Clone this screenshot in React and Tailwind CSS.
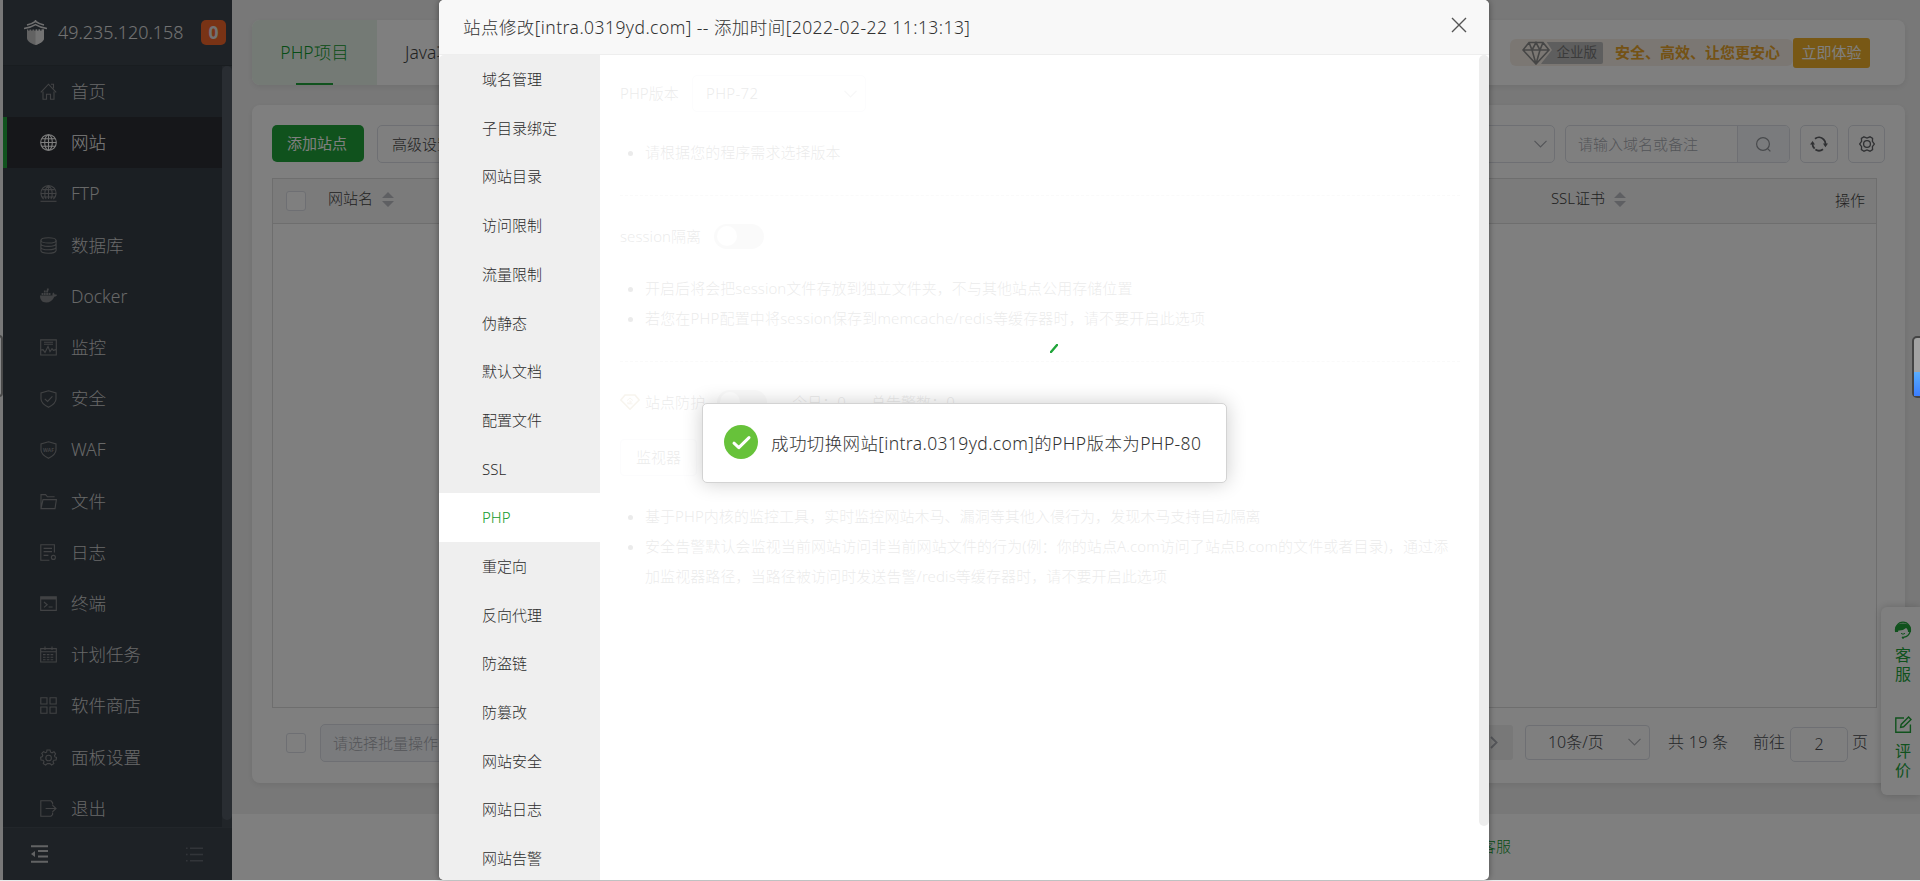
import React from 'react';
import clsx from 'clsx';

const FONT = "font-light font-['Noto_Sans','Noto_Sans_CJK_SC',sans-serif]";

const sideMenu = [
  { label: '首页', icon: 'home' },
  { label: '网站', icon: 'globe', active: true },
  { label: 'FTP', icon: 'ftp' },
  { label: '数据库', icon: 'database' },
  { label: 'Docker', icon: 'docker' },
  { label: '监控', icon: 'monitor' },
  { label: '安全', icon: 'shield' },
  { label: 'WAF', icon: 'waf' },
  { label: '文件', icon: 'folder' },
  { label: '日志', icon: 'logs' },
  { label: '终端', icon: 'terminal' },
  { label: '计划任务', icon: 'calendar' },
  { label: '软件商店', icon: 'store' },
  { label: '面板设置', icon: 'settings' },
  { label: '退出', icon: 'logout' },
];

const siteTabs = [
  '域名管理', '子目录绑定', '网站目录', '访问限制', '流量限制', '伪静态', '默认文档', '配置文件', 'SSL',
  'PHP', '重定向', '反向代理', '防盗链', '防篡改', '网站安全', '网站日志', '网站告警',
];

const SHIELD = 'M8.5 .8 L16 3 V9 C16 12.6 12.8 15 8.5 17.3 C4.2 15 1 12.6 1 9 V3 Z';
const GEAR = 'M7 1 H10 L10.6 3.2 L12 3.8 L14 2.7 L15.6 4.8 L14.5 6.6 L14.9 7.9 L16.6 8.5 L16 11 L14 11.2 L13 12.6 L13.8 14.6 L11.6 16 L10 14.6 H7.4 L5.6 16 L3.3 14.6 L4 12.5 L3 11.2 L1 11 L.6 8.4 L2.3 7.6 L2.8 6.2 L1.8 4.4 L3.6 2.6 L5.5 3.7 L6.6 3.2 Z';

const menuIcons = {
  home: (
    <>
      <path d="M.8 9.3 L8.5 1.2 L16.2 9.3" />
      <path d="M3 8.5 V16.3 H6.5 V11.3 H10.5 V16.3 H14 V8.5" />
      <path d="M11 1.3 H13.5 V5.5" />
    </>
  ),
  globe: (
    <>
      <circle cx="8.5" cy="8.5" r="7.8" />
      <ellipse cx="8.5" cy="8.5" rx="3.8" ry="7.8" />
      <path d="M8.5 .7 V16.3 M1 8.5 H16 M2 4.8 H15 M2 12.2 H15" />
    </>
  ),
  ftp: (
    <>
      <path d="M3.6 14 A7.6 7.6 0 1 1 13.4 14" />
      <path d="M6 14 C4 10 4.3 3.5 8.5 .8 C12.7 3.5 13 10 11 14 M8.5 .8 V14 M1 8.5 H16 M2.3 4.6 H14.7 M2.3 12 H14.7" />
      <path d="M.5 16.3 H16.5" />
    </>
  ),
  database: (
    <>
      <ellipse cx="8.5" cy="3.4" rx="7.6" ry="2.6" />
      <path d="M.9 3.4 V13.6 C.9 17.2 16.1 17.2 16.1 13.6 V3.4 M.9 6.8 C.9 10.2 16.1 10.2 16.1 6.8 M.9 10.2 C.9 13.6 16.1 13.6 16.1 10.2" />
    </>
  ),
  docker: (
    <>
      <path fill="currentColor" stroke="none" d="M0 7.6 H12.6 C12.2 6.4 12.6 5.2 13.4 4.6 C14.2 5.2 14.5 5.9 14.6 6.6 C15.4 6.4 16.4 6.5 17 7 C16.6 8.2 15.6 8.7 14.3 8.7 C12.8 12.6 9.8 14.5 6.2 14.5 C2 14.5 0 12 0 7.6 Z" />
      <path strokeWidth="2" strokeDasharray="1.8 .5" d="M1.6 6 H11 M3.9 3.6 H8.6 M6.9 1.4 H8.8" />
    </>
  ),
  monitor: (
    <>
      <path d="M.7 .9 H16.3 V16 H.7 Z M4 3.2 H13 M4 5.3 H13" />
      <path d="M1 11 L3 10.6 L5 13.4 L8 7.4 L10 12.6 L12 9.6 L13.4 11.4 L16 10.6" />
    </>
  ),
  shield: (
    <>
      <path d={SHIELD} />
      <path d="M4.8 8.8 L7.6 11.4 L12.4 6.4" />
    </>
  ),
  waf: (
    <>
      <path d={SHIELD} />
      <text x="8.5" y="10.8" fontSize="5" fontWeight="700" textAnchor="middle" fill="currentColor" stroke="none">WAF</text>
    </>
  ),
  folder: <path d="M1 15.6 V1.6 H5.6 L7.4 3.8 H14.6 M1 15.6 L3 6.6 H16.4 L15 15.6 Z" />,
  logs: (
    <>
      <path d="M9.4 16.2 H.8 V.8 H14.4 V8.6 M3.6 4.4 H12 M3.6 7.6 H12 M3.6 11.4 H8.4" />
      <circle cx="13.4" cy="13.4" r="2" />
    </>
  ),
  terminal: (
    <>
      <path d="M.7 1.8 H16.3 V15.4 H.7 Z" />
      <path strokeWidth="2.6" d="M.7 3.2 H16.3" />
      <path d="M4 7 L7.2 9.8 L4 12.4 M8.6 12 H12.6" />
    </>
  ),
  calendar: (
    <>
      <path d="M.7 2.6 H16.3 V16 H.7 Z M.7 5.8 H16.3 M5 .4 V4 M12 .4 V4" />
      <path strokeDasharray="2.6 1.2" d="M3 8.6 H14.4 M3 11.2 H14.4 M3 13.8 H14.4" />
    </>
  ),
  store: <path d="M.8 .8 H7 V7 H.8 Z M10 .8 H16.2 V7 H10 Z M.8 10 H7 V16.2 H.8 Z M10 10 H16.2 V16.2 H10 Z" />,
  settings: (
    <>
      <path d={GEAR} />
      <circle cx="8.6" cy="9" r="2.8" />
    </>
  ),
  logout: (
    <>
      <path d="M12.6 4.6 V2.8 L11 .8 H.8 V16.2 H11 L12.6 14.6 V12.4" />
      <path d="M5.6 8.5 H15.6 M12.4 5.2 L16 8.5 L12.4 11.8" />
    </>
  ),
};

const MenuIcon = ({ name }) => (
  <svg viewBox="0 0 17 17.5" width="17" height="17.5" fill="none" stroke="currentColor" strokeWidth="1.1">
    {menuIcons[name]}
  </svg>
);

const Chevron = ({ className }) => (
  <svg viewBox="0 0 13 8" width="13" height="8" fill="none" stroke="currentColor" strokeWidth="1.2" className={className}>
    <path d="M.5 .8 L6.5 7 L12.5 .8" />
  </svg>
);

const SortIcon = () => (
  <svg viewBox="0 0 12 15" width="12" height="15" fill="#bcbec4">
    <path d="M6 0 L12 6 H0 Z M6 15 L0 9 H12 Z" />
  </svg>
);

const Checkbox = () => <span className="size-5 shrink-0 rounded-[3px] border border-[#dcdfe6] bg-white" />;

const Toggle = ({ className }) => (
  <span className={clsx('flex h-[25px] w-[50px] items-center rounded-full bg-[#cdcdcd] px-[3px]', className)}>
    <span className="size-[20px] rounded-full bg-white" />
  </span>
);

const Sidebar = () => (
  <aside className="flex w-[229px] shrink-0 flex-col bg-[#373e46]">
    <div className="flex h-[66px] shrink-0 items-center border-b border-[#333a41] bg-[#3c444d] pl-[21px] pb-[13px] text-[#e4e4e4]">
      <svg viewBox="0 0 23 25" width="23" height="25" fill="none" className="mt-[13px]">
        <path d="M3 9.5 H20 V18 C20 21.5 16 23.5 11.5 25 C7 23.5 3 21.5 3 18 Z" fill="#c4c4c4" />
        <path d="M11.5 9.5 H20 V18 C20 21.5 16 23.5 11.5 25 Z" fill="#e6e6e6" />
        <path d="M0 8.5 Q7 7.4 11.5 4.6 Q16 7.4 23 8.5 M3 5 Q8 4 11.5 1.4 Q15 4 20 5 M11.5 0 V2" stroke="#e0e0e0" strokeWidth="1.6" />
        <path d="M4 9.8 H19" stroke="#3c444d" strokeWidth="1.2" strokeDasharray="1.6 1.4" />
      </svg>
      <span className="mt-[13px] ml-[11px] text-[17.9px] leading-none">49.235.120.158</span>
      <span className="mt-[13px] ml-auto mr-[6px] flex size-[25px] items-center justify-center rounded-[5px] bg-[#f2662b] text-[17.5px] font-bold">
        0
      </span>
    </div>
    <div className="flex min-h-0 flex-1">
      <nav className="flex flex-1 flex-col overflow-hidden">
        {sideMenu.map(({ label, icon, active }) => (
          <div
            key={label}
            className={clsx(
              'flex h-[51.23px] shrink-0 items-center border-l-4',
              active ? 'border-[#20a53a] bg-[#2c2f34] text-white' : 'border-transparent text-[#cfd0d1]'
            )}
          >
            <span className={clsx('ml-[33px]', !active && 'text-[#828588]')}>
              <MenuIcon name={icon} />
            </span>
            <span className="ml-[14px] text-[17.5px] leading-none">{label}</span>
          </div>
        ))}
      </nav>
      <div className="w-[10px] bg-[#434a52]">
        <div className="h-[754px] rounded-full bg-[#535b65]" />
      </div>
    </div>
    <div className="flex h-[53px] shrink-0 items-center justify-between border-t border-[#444c55] bg-[#3c444d] pr-[29px] pl-[28px]">
      <svg viewBox="0 0 17 18" width="17" height="18" stroke="#c4c6c8" strokeWidth="2" fill="none">
        <path d="M0 1.2 H17 M7 6 H17 M7 11.4 H17 M0 16.8 H17" />
        <path d="M0 9 L4 6 V12 Z" fill="#c4c6c8" stroke="none" />
      </svg>
      <svg viewBox="0 0 17 15" width="17" height="15" stroke="#656b73" strokeWidth="1.6" fill="none">
        <path d="M0 1.2 H1.6 M4 1.2 H17 M0 7.5 H1.6 M4 7.5 H17 M0 13.8 H1.6 M4 13.8 H17" />
      </svg>
    </div>
  </aside>
);

const ProjectTabs = () => (
  <div className="flex h-[65px] shrink-0 overflow-hidden rounded-lg bg-white shadow-[0_2px_6px_rgba(0,0,0,0.08)]">
    <div className="flex w-[125px] flex-col items-center bg-[#e8f5ea] text-[17.5px] text-[#0f9a2b]">
      <span className="flex flex-1 items-center pt-0.5">PHP项目</span>
      <span className="h-[2px] w-[37px] bg-[#20a53a]" />
    </div>
    <div className="flex items-center pl-[28px] text-[17.5px] text-[#444]">Java项目</div>
    <div className="ml-auto mr-[35px] flex items-center">
      <div className="flex h-[27px] items-center rounded-md bg-[#f7efe6] pl-3">
        <svg viewBox="0 0 30 24" width="30" height="24" fill="none" stroke="#8c8c8c" strokeWidth="1.6" className="z-10">
          <path d="M7 0 H24 L30 9 L18 24 H7 Z" fill="#f7efe6" stroke="none" />
          <path d="M7 1.5 H21 L27 9 L14 23 L1 9 Z M1 9 H27 M7 1.5 L10 9 L14 23 L18 9 L21 1.5 M10 9 L14 1.5 L18 9" />
        </svg>
        <span className="-ml-[12px] flex h-[22px] w-[63px] items-center justify-end rounded-[2px] bg-[#bcbcbc] pr-1.5 text-[13.5px] font-normal text-[#777]">
          企业版
        </span>
        <span className="ml-3 w-[178px] text-[15px] font-bold whitespace-nowrap text-[#e8a42a]">安全、高效、让您更安心</span>
      </div>
      <button className="flex h-[30px] w-[77px] items-center justify-center rounded-[3px] bg-[#f0b02a] text-[15px] font-normal text-white">
        立即体验
      </button>
    </div>
  </div>
);

const SitePanel = () => (
  <div className="mt-5 flex h-[678px] shrink-0 flex-col rounded-lg bg-white shadow-[0_2px_6px_rgba(0,0,0,0.08)]">
    <div className="mt-5 flex h-[38px] shrink-0 pr-5 pl-5 text-[15px]">
      <button className="h-[37px] w-[92px] rounded-[5px] bg-[#20a53a] pr-0.5 font-normal text-white">添加站点</button>
      <button className="ml-[13px] h-[38px] w-[90px] rounded-[5px] border border-[#dcdfe6] text-[#444]">高级设置</button>
      <div className="ml-auto flex w-[200px] items-center justify-end rounded-[5px] border border-[#dcdfe6] pr-[7px] text-[#a8abb2]">
        <Chevron />
      </div>
      <div className="ml-[10px] flex w-[225px] overflow-hidden rounded-[5px] border border-[#dcdfe6] text-[#a8abb2]">
        <span className="flex flex-1 items-center pl-[12px]">请输入域名或备注</span>
        <span className="flex w-[52px] items-center justify-center border-l border-[#dcdfe6] bg-[#f5f7fa]">
          <svg viewBox="0 0 15 15" width="15" height="15" fill="none" stroke="#909399" strokeWidth="1.2">
            <circle cx="7" cy="7" r="6.4" />
            <path d="M11.6 11.6 L14.4 14.4" />
          </svg>
        </span>
      </div>
      <button className="ml-[10px] flex w-[38px] items-center justify-center rounded-[5px] border border-[#dcdfe6]">
        <svg viewBox="0 0 18 16" width="18" height="16" fill="none" stroke="#606266" strokeWidth="1.8">
          <path d="M4.6 12.6 A6.6 6.6 0 0 1 2.5 7 M5 2.8 A6.5 6.5 0 0 1 13.6 3.4 A6.4 6.4 0 0 1 15.4 9 M13 13.2 A6.6 6.6 0 0 1 5.4 13.6" />
          <path d="M0 8.6 L2.6 5 L5 8.6 Z M18 7.6 L15.4 11.2 L13 7.6 Z" fill="#606266" stroke="none" />
        </svg>
      </button>
      <button className="ml-[10px] flex w-[37px] items-center justify-center rounded-[5px] border border-[#dcdfe6]">
        <svg viewBox="0 0 16 16" width="16" height="16" fill="none" stroke="#606266" strokeWidth="1.3">
          <path d="M5 .8 L8 2 L11 .8 L13.6 2.4 L13.4 5.4 L15.4 8 L13.4 10.6 L13.6 13.6 L11 15.2 L8 14 L5 15.2 L2.4 13.6 L2.6 10.6 L.6 8 L2.6 5.4 L2.4 2.4 Z" />
          <circle cx="8" cy="8" r="3.4" />
        </svg>
      </button>
    </div>

    <div className="mt-[15px] mr-[28px] ml-5 flex h-[530px] shrink-0 flex-col border border-[#dcdcdc]">
      <div className="flex h-[45px] shrink-0 items-center border-b border-[#dcdcdc] bg-[#f7f7f7] text-[15px] text-[#444]">
        <span className="flex pl-[13px]"><Checkbox /></span>
        <span className="mr-[9px] ml-[22px] pb-1.5">网站名</span>
        <span className="pb-1"><SortIcon /></span>
        <span className="mr-[9px] ml-auto pb-1.5">SSL证书</span>
        <span className="pb-1"><SortIcon /></span>
        <span className="mr-[11px] ml-[209px] pb-0.5">操作</span>
      </div>
    </div>

    <div className="mt-4 flex h-[38px] items-center pl-[34px] text-[16px] text-[#4c4e52]">
      <Checkbox />
      <div className="ml-[14px] flex h-[38px] w-[200px] items-center rounded-[5px] border border-[#dcdfe6] bg-[#f5f7fa] pl-3 text-[15px] text-[#a8abb2]">
        请选择批量操作
      </div>
      <div className="mb-0.5 ml-auto flex h-[35px] w-[38px] items-center justify-center rounded-[3px] bg-[#f0f0f0] text-[#a8abb2]">
        <svg viewBox="0 0 8 13" width="8" height="13" fill="none" stroke="currentColor" strokeWidth="1.8">
          <path d="M1 1 L6.6 6.5 L1 12" />
        </svg>
      </div>
      <div className="mb-0.5 ml-3 flex h-[35px] w-[125px] items-center justify-between rounded-[4px] border border-[#dcdfe6] pr-2 pl-[22px]">
        <span>10条/页</span>
        <Chevron className="text-[#b0b3b8]" />
      </div>
      <span className="mb-0.5 ml-[18px] w-[63px] tracking-[0.3px] whitespace-nowrap">共 19 条</span>
      <span className="mr-[5px] mb-0.5 ml-[22px]">前往</span>
      <span className="mt-[2px] flex h-[35px] w-[58px] items-center justify-center rounded-[5px] border border-[#dcdfe6]">2</span>
      <span className="mr-[37px] mb-0.5 ml-1">页</span>
    </div>
  </div>
);

const ContactDock = () => (
  <div className="absolute top-[607px] right-0 flex h-[188px] w-[39px] flex-col items-center rounded-l-md bg-white pt-[14px] pl-[5px] text-[16px] leading-[19px] font-normal text-[#20a53a] shadow-[0_0_8px_rgba(0,0,0,0.2)]">
    <svg viewBox="0 0 18 18" width="18" height="18" fill="none" stroke="#20a53a">
      <path d="M2 11 A7.4 7.4 0 1 1 16 11 A7.4 7.4 0 0 1 10 16.2" strokeWidth="1.2" />
      <path d="M1 11 C0 5 4 2.6 9 2.6 C14 2.6 18 5 17 11 H14 C14 9 13 7.4 12 7 C10 9 7 9.6 4.4 9.4 L4 11 Z" fill="#20a53a" stroke="none" />
      <path d="M7 12.4 Q9 14 11 12.4" />
      <circle cx="9" cy="16.6" r="1.2" fill="#20a53a" stroke="none" />
    </svg>
    <span className="mt-[7px]">客</span>
    <span>服</span>
    <svg viewBox="0 0 17 17" width="17" height="17" fill="none" stroke="#20a53a" strokeWidth="1.4" className="mt-[32px]">
      <path d="M9 2 H.8 V16.2 H15.4 V8.4" />
      <path d="M5.6 11.4 L6.2 8.4 L13.6 1 L16 3.4 L8.6 10.8 Z" />
    </svg>
    <span className="mt-[9px]">评</span>
    <span>价</span>
  </div>
);

const VipDiamond = () => (
  <svg viewBox="0 0 20 16" width="20" height="16" fill="none" stroke="#b09050" strokeWidth="1.6">
    <path d="M5 1 H15 L19.2 6 L10 15.2 L.8 6 Z" />
    <path d="M7 6.6 L10 4 L13 6.6 M10 6.4 V9.8 M7.4 9.8 H12.6 M8 8 V9.8 M10 8 H12" strokeWidth=".9" />
  </svg>
);

const PhpSettings = () => (
  <div className="relative flex-1 pl-5 text-[15px] tracking-[0.05px] text-[#333]">
    <div className="mt-5 flex h-[37px] items-center">
      <span className="w-[60px] whitespace-nowrap">PHP版本</span>
      <div className="ml-3 flex h-[37px] w-[174px] items-center justify-between rounded-[5px] border border-[#dcdfe6] pr-2 pl-[13px] tracking-[0.3px]">
        PHP-72
        <Chevron className="text-[#a8abb2]" />
      </div>
    </div>
    <ul className="mt-[25px] list-disc pl-[25px] leading-[30px]">
      <li>请根据您的程序需求选择版本</li>
    </ul>
    <div className="mt-[28px] mr-[19px] border-t border-dashed border-[#ccc]" />

    <div className="mt-[27px] flex h-[26px] items-center">
      <span className="w-[82px] whitespace-nowrap">session隔离</span>
      <Toggle className="ml-3" />
    </div>
    <ul className="mt-[24px] list-disc pl-[25px] leading-[30px]">
      <li>开启后将会把session文件存放到独立文件夹，不与其他站点公用存储位置</li>
      <li className="tracking-[0.16px]">若您在PHP配置中将session保存到memcache/redis等缓存器时，请不要开启此选项</li>
    </ul>
    <div className="mt-[28px] mr-[19px] border-t border-dashed border-[#ccc]" />

    <div className="mt-[27px] flex h-[26px] items-center">
      <VipDiamond />
      <span className="ml-[5px]">站点防护</span>
      <Toggle className="ml-3" />
      <span className="ml-[25px]">今日：0</span>
      <span className="ml-[25px]">总告警数：0</span>
    </div>
    <button className="mt-[24px] h-[37px] w-[77px] rounded-[4px] border border-[#dcdfe6]">监视器</button>
    <ul className="mt-[25px] mr-[12px] list-disc pl-[25px] leading-[30px]">
      <li>基于PHP内核的监控工具，实时监控网站木马、漏洞等其他入侵行为，发现木马支持自动隔离</li>
      <li className="tracking-[0.09px]">
        安全告警默认会监视当前网站访问非当前网站文件的行为(例：你的站点A.com访问了站点B.com的文件或者目录)，通过添
        <br />
        加监视器路径，当路径被访问时发送告警/redis等缓存器时，请不要开启此选项
      </li>
    </ul>
    {/* loading mask */}
    <div className="absolute inset-0 bg-white/90">
      <svg viewBox="0 0 8 9" width="8" height="9" className="absolute top-[289px] left-[450px]">
        <path d="M1 8 L7 1" stroke="#20a53a" strokeWidth="2.4" strokeLinecap="round" />
      </svg>
    </div>
  </div>
);

const SiteModal = () => (
  <div className="absolute top-0 left-[439px] flex h-[880px] w-[1050px] flex-col overflow-hidden rounded-[5px] bg-white shadow-[0_0_6px_rgba(0,0,0,0.4)]">
    <div className="flex h-[55px] shrink-0 items-center justify-between border-b border-[#eee] bg-[#f8f8f8] pr-[22px] pl-[24px] text-[17.5px] tracking-[0.44px] text-[#333]">
      <span>站点修改[intra.0319yd.com] -- 添加时间[2022-02-22 11:13:13]</span>
      <svg viewBox="0 0 16 16" width="16" height="16" fill="none" stroke="#555" strokeWidth="1.4" className="-mt-1">
        <path d="M1 1 L15 15 M15 1 L1 15" />
      </svg>
    </div>
    <div className="flex min-h-0 flex-1">
      <nav className="w-[161px] shrink-0 overflow-hidden rounded-tl-[5px] bg-[#efefef] text-[15px] text-[#2c2c2c]">
        {siteTabs.map((tab) => (
          <div
            key={tab}
            className={clsx('flex h-[48.7px] items-center pl-[43px]', tab === 'PHP' && 'bg-white text-[#0f9a2b]')}
          >
            {tab}
          </div>
        ))}
      </nav>
      <PhpSettings />
      <div className="h-[771px] w-[10px] rounded-full bg-[#ededed]" />
    </div>
  </div>
);

const SuccessToast = () => (
  <div className="absolute top-[403px] left-[702px] flex h-[80px] w-[525px] items-center rounded-[5px] border border-[#d3d3d3] bg-white pl-[21px] text-[17.5px] tracking-[0.38px] text-[#333] shadow-[0_0_20px_rgba(0,0,0,0.2)]">
    <svg viewBox="0 0 34 34" width="34" height="34" className="-mt-0.5">
      <circle cx="17" cy="17" r="17" fill="#67c23a" />
      <path d="M10 18.2 L14.8 22.6 L25 12.6" fill="none" stroke="#fff" strokeWidth="3" strokeLinecap="round" strokeLinejoin="round" />
    </svg>
    <span className="ml-[13px] whitespace-nowrap">成功切换网站[intra.0319yd.com]的PHP版本为PHP-80</span>
  </div>
);

const App = () => (
  <div className={clsx('relative h-[881px] w-[1920px] overflow-hidden bg-[#e8ecec]', FONT)}>
    <div className="isolate flex h-[880px] bg-[#f1f1f1] pl-[3px]">
      <Sidebar />
      <main className="flex flex-1 flex-col">
        <div className="flex flex-col pt-5 pr-[15px] pl-5">
          <ProjectTabs />
          <SitePanel />
        </div>
        <footer className="mt-[31px] flex flex-1 items-center bg-white pb-0.5 pl-[1249px] text-[15px] text-[#0f9a2b]">客服</footer>
      </main>
    </div>
    <ContactDock />
    <div className="absolute inset-x-0 top-0 h-[880px] bg-black/50" />
    <div className="absolute top-[335px] -left-[6px] h-[62px] w-[9px] rounded-[4px] border-2 border-[#4a4a4a] bg-[#8a8a8a]" />
    <div className="absolute top-[336px] left-[1912px] flex h-[62px] w-[14px] items-end rounded-[5px] border-2 border-[#444] bg-[#a2a2a2]">
      <div className="h-[24px] w-full bg-linear-to-b from-[#5aaeff] to-[#3c7dff]" />
    </div>
    <SiteModal />
    <SuccessToast />
  </div>
);

export default App;
